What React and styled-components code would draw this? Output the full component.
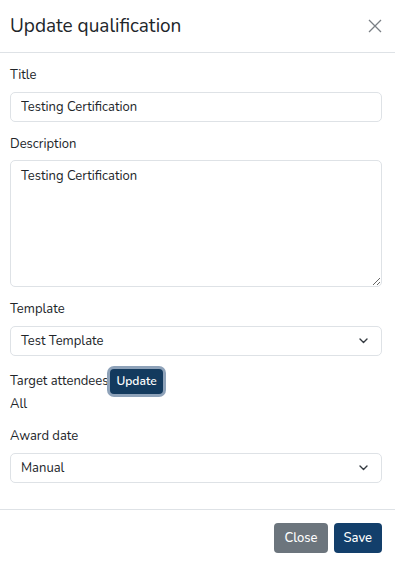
import React from "react";
import styled, { createGlobalStyle } from "styled-components";

const GlobalStyle = createGlobalStyle`
  html, body {
    margin: 0;
    padding: 0;
    background: #fff;
  }
  body {
    font-family: "Nunito", "Lato", "Noto Sans", sans-serif;
    color: #212529;
  }
  * {
    box-sizing: border-box;
  }
`;

const Modal = styled.div`
  width: 395px;
  height: 563px;
  display: flex;
  flex-direction: column;
  background: #fff;
`;

const Header = styled.div`
  height: 53px;
  display: flex;
  align-items: center;
  justify-content: space-between;
  padding: 0 13px 0 10px;
  border-bottom: 1px solid #dee2e6;
`;

const Title = styled.h5`
  margin: 0;
  font-size: 19px;
  font-weight: 400;
  line-height: 1.2;
`;

const CloseIcon = styled.button`
  border: none;
  background: none;
  padding: 0;
  width: 14px;
  height: 14px;
  display: flex;
  cursor: pointer;
`;

const Body = styled.div`
  flex: 1;
  padding: 12px 13px 0 10px;
`;

const Group = styled.div`
  margin-bottom: ${(p) => p.$gap || 12}px;
`;

const Label = styled.div`
  font-size: 13px;
  line-height: 20px;
  margin-bottom: ${(p) => p.$gap ?? 7}px;
`;

const fieldCss = `
  display: block;
  width: 100%;
  border: 1px solid #dee2e6;
  border-radius: 5px;
  font-family: inherit;
  font-size: 13px;
  color: #212529;
  background: #fff;
  padding: 0 10px;
  outline: none;
`;

const Input = styled.input`
  ${fieldCss}
  height: 30px;
`;

const TextArea = styled.textarea`
  ${fieldCss}
  height: 127px;
  padding-top: 6px;
  line-height: 1.5;
  resize: vertical;
`;

const SelectBox = styled.div`
  ${fieldCss}
  height: 30px;
  display: flex;
  align-items: center;
  justify-content: space-between;
  padding-right: 13px;
`;

const Row = styled.div`
  display: flex;
  align-items: center;
  height: 26px;
  margin-top: 1px;
  font-size: 13px;
`;

const SmallButton = styled.button`
  margin-left: 2px;
  height: 25px;
  padding: 0 6px;
  border: none;
  border-radius: 4px;
  background: #133a5e;
  color: #fff;
  font-family: inherit;
  font-size: 12px;
  font-weight: 600;
  box-shadow: 0 0 0 3px #8ea2b9;
`;

const Plain = styled.div`
  font-size: 13px;
  line-height: 20px;
  margin-bottom: 12px;
`;

const Footer = styled.div`
  border-top: 1px solid #dee2e6;
  display: flex;
  justify-content: flex-end;
  gap: 6px;
  padding: 13px 13px 10px;
`;

const Button = styled.button`
  height: 30px;
  padding: 0 10px;
  border: none;
  border-radius: 4px;
  background: ${(p) => (p.$variant === "primary" ? "#133f6b" : "#6c757d")};
  color: #fff;
  font-family: inherit;
  font-size: 13px;
  font-weight: 500;
`;

const Chevron = () => (
  <svg width="9" height="6" viewBox="0 0 9 6" fill="none">
    <path d="M1 1l3.5 3.5L8 1" stroke="#343a40" strokeWidth="1.4" strokeLinecap="round" strokeLinejoin="round" />
  </svg>
);

const Select = ({ value }) => (
  <SelectBox>
    <span>{value}</span>
    <Chevron />
  </SelectBox>
);

export default function App() {
  return (
    <>
      <GlobalStyle />
      <Modal>
        <Header>
          <Title>Update qualification</Title>
          <CloseIcon aria-label="Close">
            <svg width="14" height="14" viewBox="0 0 14 14">
              <path d="M1 1l12 12M13 1L1 13" stroke="#7a7f85" strokeWidth="1.3" />
            </svg>
          </CloseIcon>
        </Header>
        <Body>
          <Group>
            <Label>Title</Label>
            <Input defaultValue="Testing Certification" />
          </Group>
          <Group>
            <Label $gap={6}>Description</Label>
            <TextArea defaultValue="Testing Certification" />
          </Group>
          <Group>
            <Label>Template</Label>
            <Select value="Test Template" />
          </Group>
          <Row>
            Target attendees
            <SmallButton>Update</SmallButton>
          </Row>
          <Plain>All</Plain>
          <Group>
            <Label>Award date</Label>
            <Select value="Manual" />
          </Group>
        </Body>
        <Footer>
          <Button>Close</Button>
          <Button $variant="primary">Save</Button>
        </Footer>
      </Modal>
    </>
  );
}
